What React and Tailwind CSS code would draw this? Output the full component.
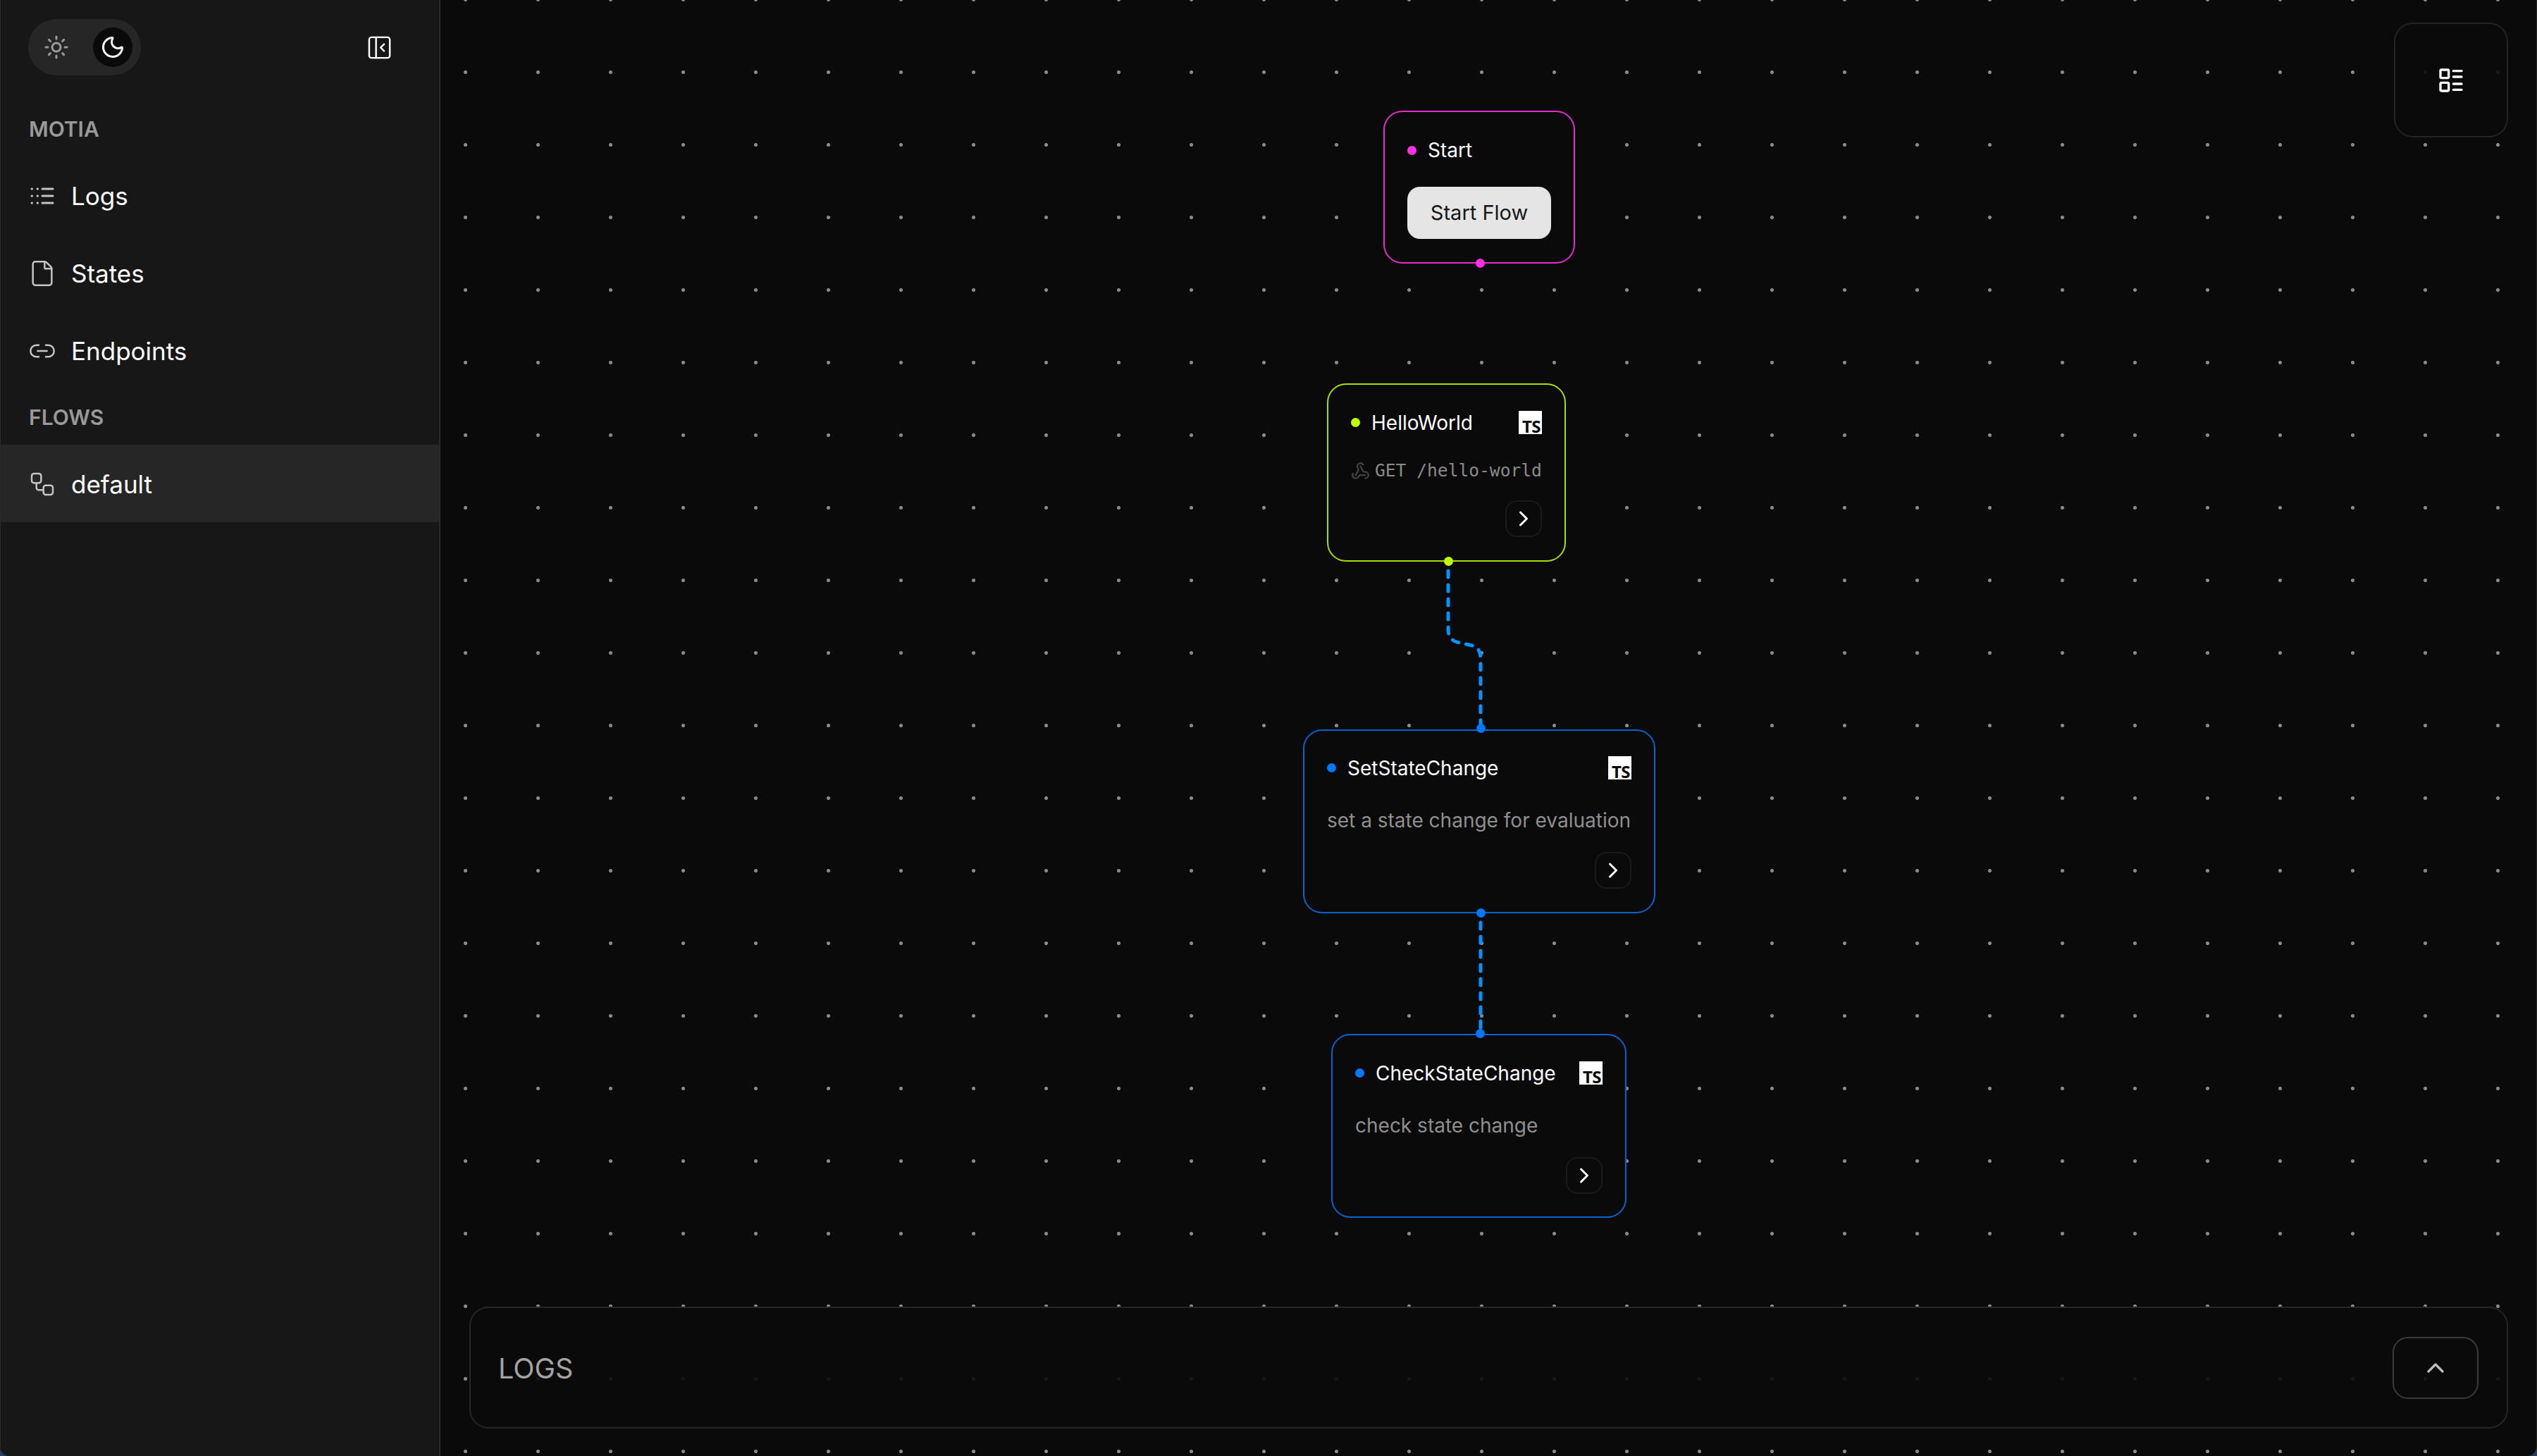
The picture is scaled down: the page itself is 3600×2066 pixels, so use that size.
import { ChevronRight, ChevronUp, File, LayoutList, Link2, Moon, PanelLeftClose, Sun, Webhook, Workflow } from 'lucide-react';

function LogsIcon() {
  return (
    <svg width="36" height="26" viewBox="0 0 36 26" fill="none" stroke="currentColor" strokeWidth="3" strokeLinecap="round">
      <path d="M3 3h.5M11 3h.5M18 3h15M3 13h.5M11 13h.5M18 13h15M3 23h.5M11 23h.5M18 23h15" />
    </svg>
  );
}

function NavRow({ icon, label, active }) {
  return (
    <div className={`flex h-[110px] items-center gap-[23px] pl-[41px] text-[35px] text-white ${active ? 'bg-[#262626] pt-[2px]' : ''}`}>
      <span className="flex w-[36px] items-center justify-center text-[#c4c4c4] [&>svg]:shrink-0">{icon}</span>
      <span>{label}</span>
    </div>
  );
}

function TsBadge() {
  return (
    <div className="flex h-[33px] w-[33px] items-end justify-end bg-white pr-[2px] pb-[3px] font-['Open_Sans',sans-serif] text-[24px] font-bold leading-[17px] tracking-[-0.5px] text-[#0a0a0a]">
      TS
    </div>
  );
}

function NodeHeader({ dot, title }) {
  return (
    <div className="flex h-[33px] items-center justify-between">
      <div className="flex items-center gap-[16px] text-[28px] text-white">
        <span className={`h-[13px] w-[13px] rounded-full ${dot}`} />
        <span>{title}</span>
      </div>
      <TsBadge />
    </div>
  );
}

function OpenButton({ className }) {
  return (
    <div className={`flex h-[52px] w-[52px] items-center justify-center self-end rounded-[16px] border-2 border-[#1a1a1a] text-white ${className}`}>
      <ChevronRight size={36} strokeWidth={2} />
    </div>
  );
}

function Handle({ className }) {
  return <span className={`absolute h-[13px] w-[13px] rounded-full ${className}`} />;
}

export default function App() {
  return (
    <div className="h-[2066px] w-[3600px] bg-[#263f5c]">
      <div className="flex h-full w-full overflow-hidden rounded-b-[14px] border-r border-[#222] bg-[#0a0a0a] font-['Inter',sans-serif]">
        {/* Sidebar */}
        <aside className="flex h-full w-[625px] shrink-0 flex-col border-r-2 border-l border-[#2a2a2a] bg-[#171717]">
          <div className="flex h-[107px] items-end justify-between pr-[65px] pl-[39px]">
            <div className="flex h-[80px] w-[160px] items-center justify-between rounded-full bg-[#262626] pr-[12px] pl-[22px]">
              <Sun size={36} strokeWidth={2} className="text-[#9a9a9a]" />
              <div className="flex h-[56px] w-[56px] items-center justify-center rounded-full bg-[#0a0a0a] text-white">
                <Moon size={36} strokeWidth={2} />
              </div>
            </div>
            <div className="mb-[20px] text-white">
              <PanelLeftClose size={39} strokeWidth={1.5} />
            </div>
          </div>

          <div className="flex h-[116px] items-center pt-[36px] pl-[40px] text-[30px] font-semibold text-[#999]">MOTIA</div>
          <NavRow icon={<LogsIcon />} label="Logs" />
          <NavRow icon={<File size={40} strokeWidth={1.5} />} label="States" />
          <NavRow icon={<Link2 size={40} strokeWidth={1.5} />} label="Endpoints" />
          <div className="flex h-[78px] items-center pl-[40px] text-[30px] font-semibold text-[#999]">FLOWS</div>
          <NavRow icon={<Workflow size={40} strokeWidth={1.5} />} label="default" active />
        </aside>

        {/* Flow canvas */}
        <main className="relative ml-[1px] h-full flex-1 bg-[radial-gradient(circle,#86868c_2.2px,transparent_2.9px)] bg-[size:103px_103px] bg-[position:-17px_-52px]">
          <svg className="absolute inset-0" width="2974" height="2066" fill="none" stroke="#0094ff" strokeWidth="5" strokeLinecap="round" strokeDasharray="9 11">
            <path d="M1429 810V893Q1429 907 1441 911L1463 916Q1475 919 1475 935V1030" />
            <path d="M1475 1309V1462" />
          </svg>

          {/* Start node */}
          <div className="absolute top-[157px] left-[1337px] flex h-[217px] w-[272px] flex-col rounded-[27px] border-2 border-[#e32ccb] bg-[#0a0a0a] px-[32px] pt-[39px]">
            <div className="flex h-[30px] items-center gap-[16px] text-[28px] text-white">
              <span className="h-[13px] w-[13px] rounded-full bg-[#ff2fe6]" />
              <span>Start</span>
            </div>
            <div className="mt-[37px] flex h-[74px] items-center justify-center rounded-[18px] bg-[#e5e5e5] text-[29px] text-[#171717]">Start Flow</div>
            <Handle className="-bottom-[8px] left-[129px] bg-[#ff2fe6]" />
          </div>

          {/* HelloWorld node */}
          <div className="absolute top-[544px] left-[1257px] flex h-[253px] w-[339px] flex-col rounded-[27px] border-2 border-[#a6e000] bg-[#0a0a0a] px-[32px] pt-[37px]">
            <NodeHeader dot="bg-[#c2ff00]" title="HelloWorld" />
            <div className="mt-[35px] flex h-[34px] items-center gap-[7px] font-['DejaVu_Sans_Mono',monospace] text-[24.6px] whitespace-nowrap text-[#8a8a8a]">
              <Webhook size={27} strokeWidth={2} className="shrink-0 text-[#444]" />
              <span>GET /hello-world</span>
            </div>
            <OpenButton className="mt-[25px]" />
            <Handle className="-bottom-[8px] left-[164px] bg-[#c2ff00]" />
          </div>

          {/* SetStateChange node */}
          <div className="absolute top-[1035px] left-[1223px] flex h-[261px] w-[500px] flex-col rounded-[27px] border-2 border-[#0a62d0] bg-[#0a0a0a] px-[32px] pt-[36px]">
            <NodeHeader dot="bg-[#0077ff]" title="SetStateChange" />
            <div className="mt-[38px] h-[40px] text-[28px] leading-[40px] whitespace-nowrap text-[#8f8f8f]">set a state change for evaluation</div>
            <OpenButton className="mt-[25px]" />
            <Handle className="-top-[10px] left-[244px] bg-[#0077ff]" />
            <Handle className="-bottom-[8px] left-[244px] bg-[#0077ff]" />
          </div>

          {/* CheckStateChange node */}
          <div className="absolute top-[1467px] left-[1263px] flex h-[261px] w-[419px] flex-col rounded-[27px] border-2 border-[#0a62d0] bg-[#0a0a0a] px-[32px] pt-[37px]">
            <NodeHeader dot="bg-[#0077ff]" title="CheckStateChange" />
            <div className="mt-[38px] h-[40px] text-[28px] leading-[40px] whitespace-nowrap text-[#8f8f8f]">check state change</div>
            <OpenButton className="mt-[25px]" />
            <Handle className="-top-[9px] left-[203px] bg-[#0077ff]" />
          </div>

          {/* Overlay panels */}
          <div className="absolute top-[32px] right-[40px] flex h-[163px] w-[162px] items-center justify-center rounded-[27px] border-2 border-[#242424] bg-[#0a0a0a]/90 text-white">
            <LayoutList size={40} strokeWidth={2} />
          </div>
          <div className="absolute right-[40px] bottom-[39px] left-[40px] flex h-[173px] items-center justify-between rounded-[27px] border-2 border-[#262626] bg-[#0a0a0a]/90 pr-[40px] pl-[39px]">
            <span className="pt-[4px] text-[39.5px] text-[#a3a3a3]">LOGS</span>
            <div className="flex h-[88px] w-[122px] items-center justify-center rounded-[22px] border-2 border-[#3a3a3a] text-[#bdbdbd]">
              <ChevronUp size={40} strokeWidth={2} />
            </div>
          </div>
        </main>
      </div>
    </div>
  );
}
